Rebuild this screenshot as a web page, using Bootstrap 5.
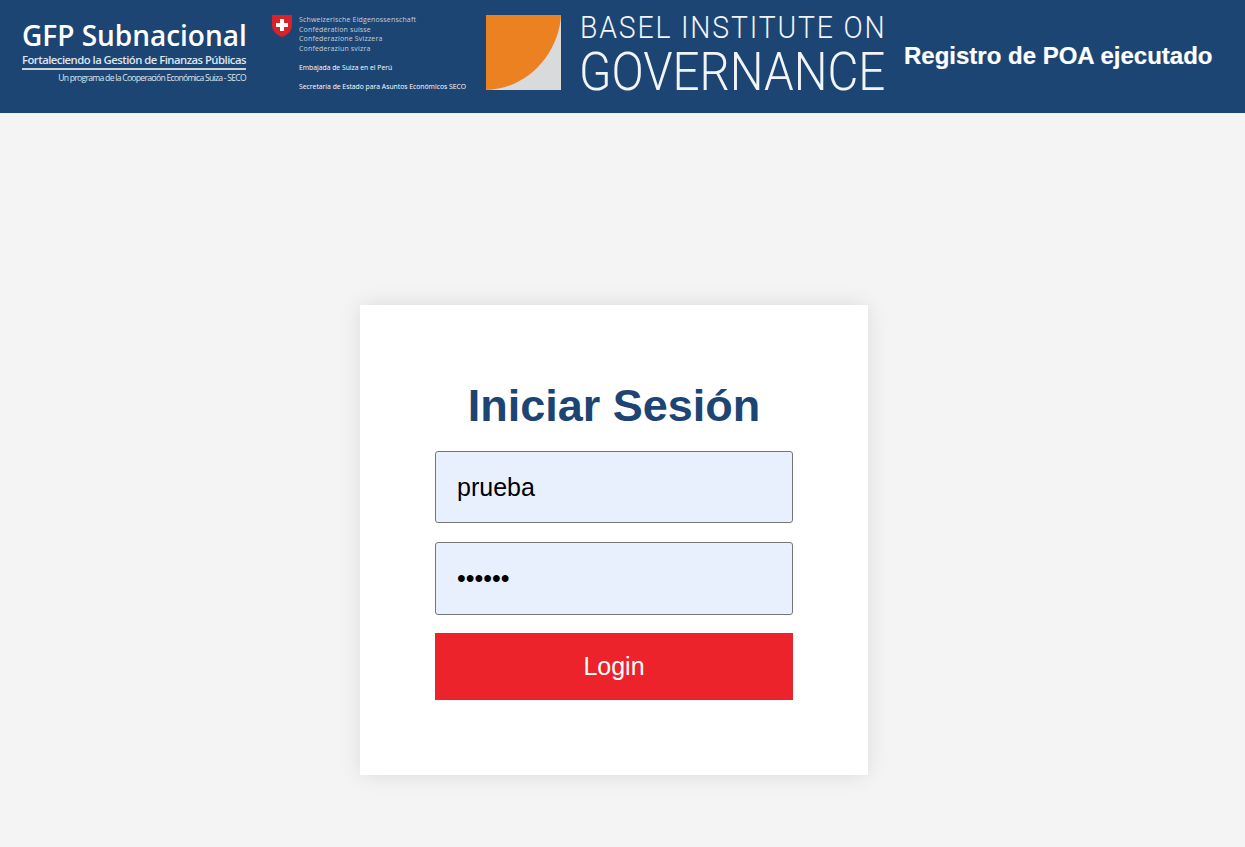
<!DOCTYPE html>
<html lang="es">
<head>
    <meta charset="UTF-8">
    <meta name="viewport" content="width=device-width, initial-scale=1.0">
    <title>Registro de POA ejecutado</title>
    <link rel="stylesheet" href="https://cdn.jsdelivr.net/npm/bootstrap@5.3.0/dist/css/bootstrap.min.css">
    <style>
        body { background: #f4f4f4; font-family: "Liberation Sans", Arial, sans-serif; }
        .top-bar { background: #1c4574; height: 113px; color: #fff; }
        .gfp-logo { width: 224px; margin: 20px 0 0 22px; font-family: "Open Sans", sans-serif; white-space: nowrap; }
        .gfp-name { font-size: 28px; font-weight: 600; line-height: 30px; letter-spacing: -.02px; }
        .gfp-sub { font-size: 11.3px; font-weight: 600; line-height: 14px; color: #dfe6ee; border-bottom: 2px solid #c9d3e0; padding-bottom: 1px; margin-top: 3px; letter-spacing: -.52px; }
        .gfp-prog { font-size: 8.6px; line-height: 12px; margin-top: 2px; color: #dfe6ee; text-align: right; letter-spacing: -.73px; }
        .swiss-logo { margin: 15px 0 0 26px; width: 196px; gap: 7px; font-family: "Open Sans", sans-serif; white-space: nowrap; }
        .swiss-logo svg { flex: none; }
        .swiss-names { font-size: 7px; line-height: 9.5px; color: #c5d0dd; letter-spacing: .16px; }
        .swiss-org { font-size: 6.8px; line-height: 9.5px; margin-top: 9.5px; }
        .basel-logo { margin: 15px 0 0 18px; width: 399px; gap: 19px; white-space: nowrap; }
        .basel-logo svg { flex: none; }
        .basel-line { font-family: Roboto, sans-serif; font-weight: 300; color: #f2f5f8; transform-origin: left center; }
        .basel-a { font-size: 31px; line-height: 26px; letter-spacing: 2px; transform: scaleX(.915); }
        .basel-b { font-size: 53px; line-height: 48px; margin-left: -1px; transform: scaleX(.897); margin-top: 7px; }
        .top-title { font-size: 24px; font-weight: 700; margin: 41px 0 0 19px; line-height: 30px; white-space: nowrap; -webkit-text-stroke: .2px #fff; }
        .login-wrap { min-height: 734px; padding: 192px 17px 0 0; }
        .login-box { width: 508px; height: 470px; padding: 75px 75px 0; background: #fff; box-shadow: 0 0 20px rgba(0, 0, 0, .1); }
        .login-title { font-size: 45px; font-weight: 700; line-height: 51px; color: #1c4574; margin: 0 0 20px; text-align: center; }
        .login-input.form-control { height: 72px; padding: 0 21px; font-size: 25px; color: #000; background: #e8f0fe; border: 1px solid #767676; border-radius: 3px; margin-bottom: 19px; box-shadow: none; }
        .login-input.second { height: 73px; margin-bottom: 18px; }
        .login-btn.btn { height: 67px; font-size: 25px; color: #fff; background: #ec232a; border: 0; border-radius: 0; }
    </style>
</head>
<body>

<!-- Cabecera -->
<header class="top-bar d-flex align-items-start">
    <div class="gfp-logo">
        <div class="gfp-name">GFP Subnacional</div>
        <div class="gfp-sub">Fortaleciendo la Gestión de Finanzas Públicas</div>
        <div class="gfp-prog">Un programa de la Cooperación Económica Suiza - SECO</div>
    </div>
    <div class="swiss-logo d-flex align-items-start">
        <svg width="20" height="22" viewBox="0 0 20 22">
            <path d="M0 0H20V11C20 16 15 20 10 22C5 20 0 16 0 11Z" fill="#d8232a"/>
            <path d="M8 4H12V8H16V12H12V16H8V12H4V8H8Z" fill="#fff"/>
        </svg>
        <div>
            <div class="swiss-names">Schweizerische Eidgenossenschaft</div>
            <div class="swiss-names">Confédération suisse</div>
            <div class="swiss-names">Confederazione Svizzera</div>
            <div class="swiss-names">Confederaziun svizra</div>
            <div class="swiss-org">Embajada de Suiza en el Perú</div>
            <div class="swiss-org">Secretaría de Estado para Asuntos Económicos SECO</div>
        </div>
    </div>
    <div class="basel-logo d-flex align-items-start">
        <svg width="75" height="75" viewBox="0 0 75 75">
            <rect width="75" height="75" fill="#d9dadc"/>
            <path d="M0 0H75C73 38 42 74 0 75Z" fill="#ec8122"/>
        </svg>
        <div>
            <div class="basel-line basel-a">BASEL INSTITUTE ON</div>
            <div class="basel-line basel-b">GOVERNANCE</div>
        </div>
    </div>
    <div class="top-title">Registro de POA ejecutado</div>
</header>

<!-- Formulario -->
<main class="login-wrap d-flex justify-content-center align-items-start">
    <form class="login-box">
        <h1 class="login-title">Iniciar Sesión</h1>
        <input type="text" class="form-control login-input" value="prueba">
        <input type="password" class="form-control login-input second" value="123456">
        <button type="button" class="btn login-btn w-100">Login</button>
    </form>
</main>

<script src="https://cdn.jsdelivr.net/npm/bootstrap@5.3.0/dist/js/bootstrap.bundle.min.js"></script>
</body>
</html>
